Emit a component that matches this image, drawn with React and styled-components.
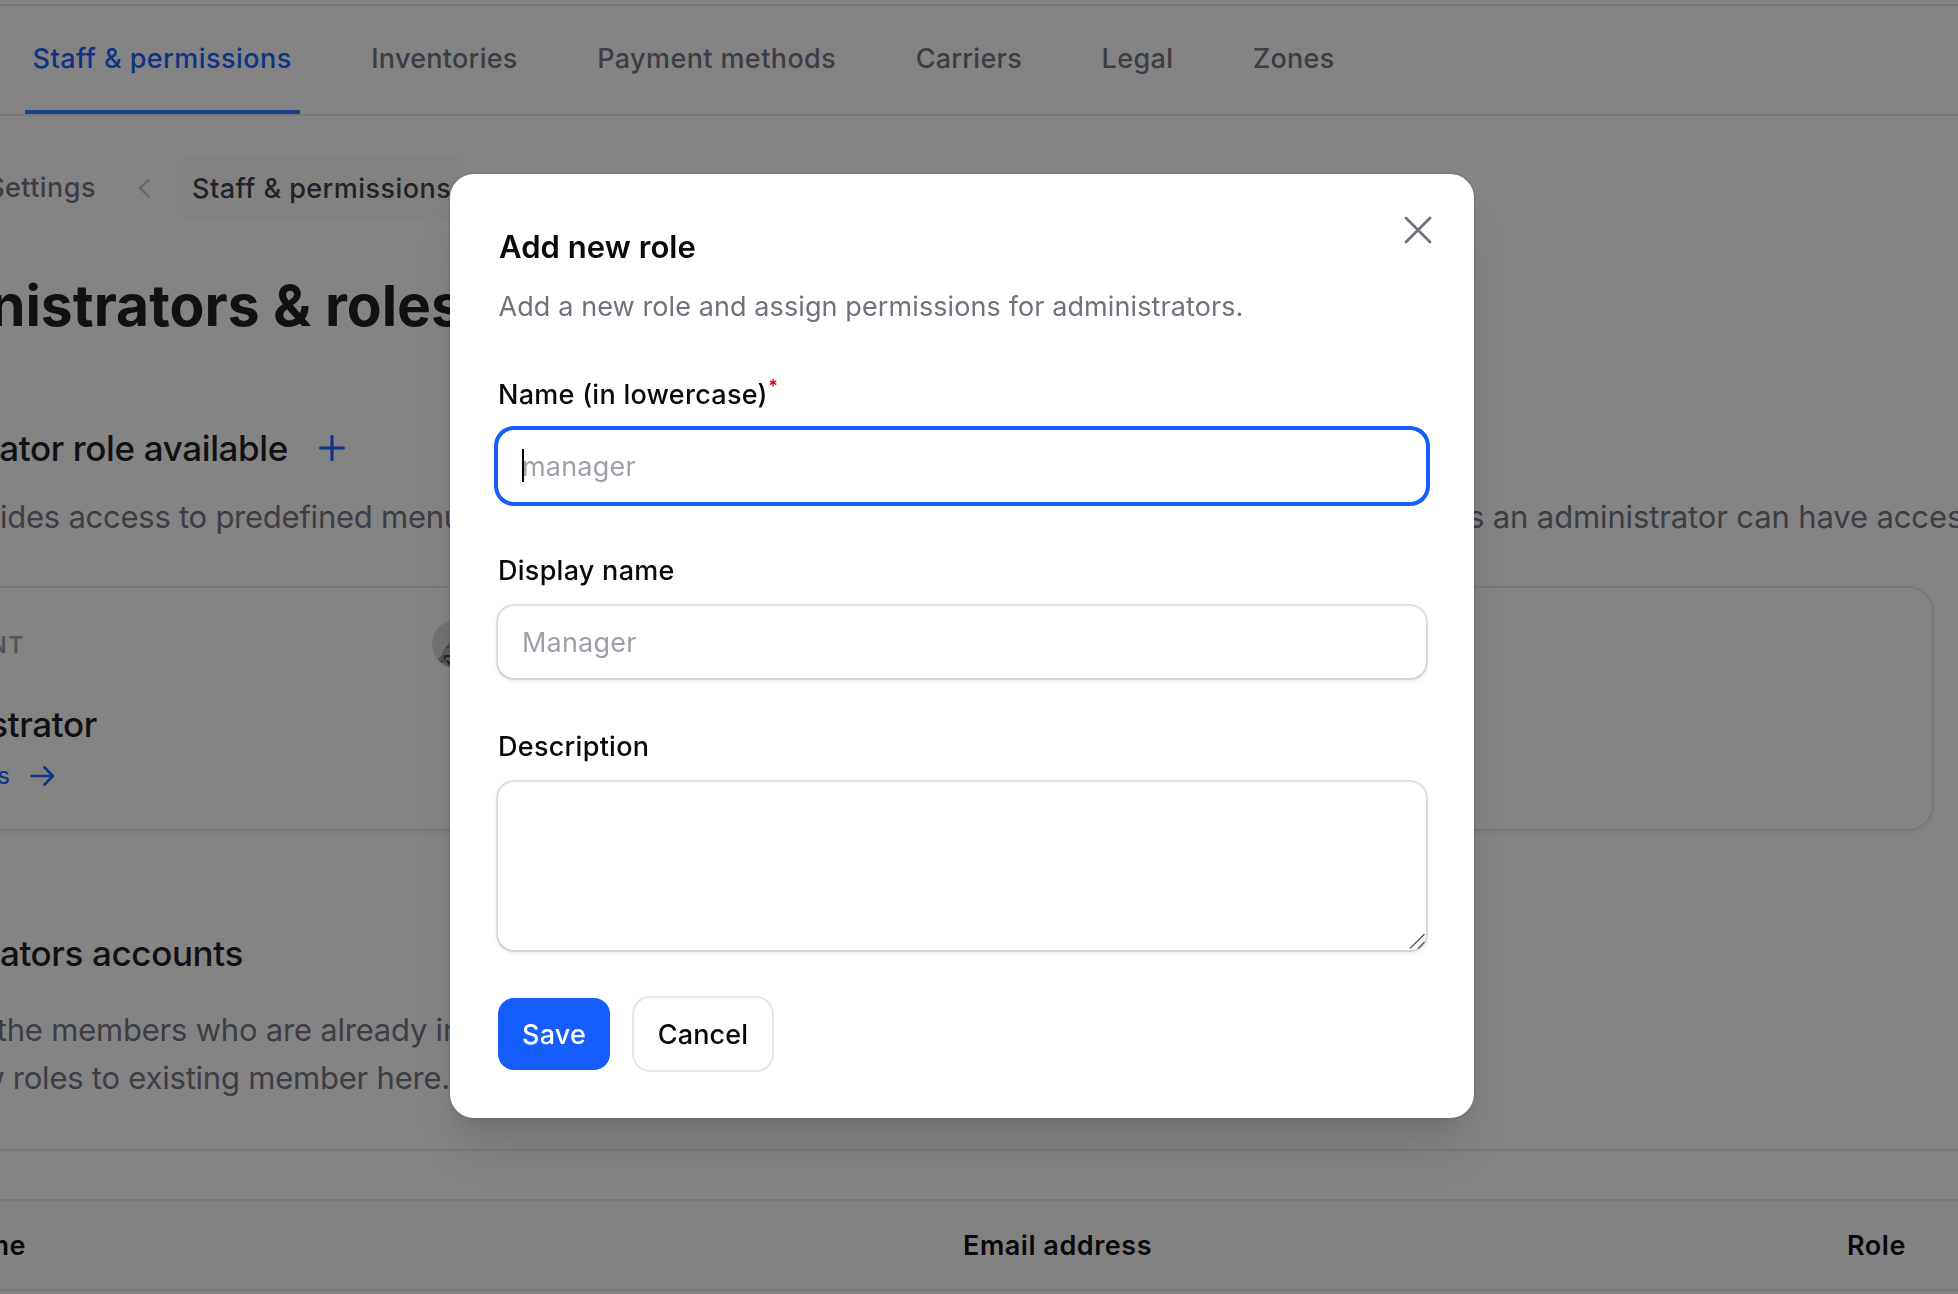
import React from "react";
import styled, { createGlobalStyle } from "styled-components";

const ink = "#09090b";
const heading = "#18181b";
const muted = "#71717b";
const faint = "#9f9fa9";
const blue = "#155dfc";
const line = "#e6e6e7";

const GlobalStyle = createGlobalStyle`
  * { box-sizing: border-box; }
  body {
    margin: 0;
    background: #fff;
    font-family: Inter, "Liberation Sans", sans-serif;
    font-size: 27px;
    overflow: hidden;
  }
`;

const Page = styled.div`
  display: flex;
  flex-direction: column;
  width: 1958px;
  height: 1294px;
  padding-top: 4px;
  overflow: hidden;
  background: #fff;
  white-space: nowrap;
`;

const Nav = styled.nav`
  display: flex;
  flex: none;
  gap: 64px;
  height: 112px;
  padding-left: 25px;
  border-top: 2px solid ${line};
  border-bottom: 2px solid ${line};
`;

const Tab = styled.span`
  height: 108px;
  padding: 0 8px 0 7.5px;
  line-height: 106px;
  font-weight: 500;
  letter-spacing: ${(p) => p.$track}px;
  color: ${(p) => (p.$active ? blue : muted)};
  border-bottom: 4px solid ${(p) => (p.$active ? "#2b7fff" : "transparent")};
`;

const Tail = styled.div`
  display: flex;
  flex: none;
  justify-content: flex-end;
  width: ${(p) => p.$width}px;
  overflow: hidden;
`;

const Breadcrumb = styled.div`
  display: flex;
  align-items: center;
  flex: none;
  height: 64px;
  margin-top: 40px;
  line-height: 66px;
  font-weight: 500;
  letter-spacing: 0.45px;
  color: ${muted};
`;

const Chevron = styled.svg`
  margin: 0 25px 0 41px;
`;

const Crumb = styled.span`
  width: 291px;
  height: 64px;
  padding-left: 16px;
  border-radius: 14px;
  background: #fbfbfb;
  color: #3a3a41;
`;

const Title = styled.h1`
  margin: 50px 0 0;
  font-size: 57px;
  line-height: 72px;
  font-weight: 700;
  color: ${heading};
`;

const SectionHead = styled.div`
  display: flex;
  align-items: center;
  flex: none;
  gap: 31px;
  margin-top: ${(p) => p.$top}px;
`;

const SectionTitle = styled.h2`
  margin: 0;
  font-size: 35px;
  line-height: 56px;
  font-weight: 500;
  letter-spacing: -0.37px;
  color: ${heading};
`;

const Lead = styled.div`
  display: flex;
  flex: none;
  height: 48px;
  margin-top: 17px;
  font-size: 31px;
  line-height: 48px;
  color: ${muted};
`;

const LeadPart = styled.span`
  flex: none;
  width: ${(p) => p.$width}px;
  letter-spacing: ${(p) => p.$track}px;
`;

const Card = styled.section`
  flex: none;
  width: 1934px;
  height: 245px;
  margin-top: 45px;
  padding-top: 32px;
  border: 2px solid ${line};
  border-left: 0;
  border-radius: 0 26px 26px 0;
  box-shadow: 0 2px 4px rgba(0, 0, 0, 0.07);
`;

const CardTop = styled.div`
  display: flex;
  justify-content: space-between;
  width: 480px;
  height: 48px;
  line-height: 50px;
  font-size: 23px;
  font-weight: 600;
  letter-spacing: 1.6px;
  color: ${faint};
`;

const CardName = styled(SectionTitle)`
  margin-top: 28px;
`;

const CardLink = styled.div`
  display: flex;
  align-items: center;
  gap: 19px;
  margin-top: 6px;
  line-height: 36px;
  font-size: 24px;
  color: ${blue};
`;

const Copy = styled.div`
  flex: none;
  margin-top: 25px;
  font-size: 31px;
  line-height: 48px;
  letter-spacing: -0.22px;
  color: ${muted};
`;

const Rule = styled.div`
  flex: none;
  height: 2px;
  margin: 47px 0 48px;
  background: ${line};
`;

const TableHead = styled.div`
  display: grid;
  flex: none;
  grid-template-columns: 963px 884px 1fr;
  height: 92px;
  line-height: 90px;
  font-weight: 600;
  letter-spacing: 0.54px;
  color: ${ink};
  background: #fafafa;
  border-top: 2px solid ${line};
  border-bottom: 2px solid ${line};
`;

const Backdrop = styled.div`
  position: fixed;
  inset: 0;
  display: flex;
  align-items: flex-start;
  padding: 174px 0 0 450px;
  background: rgba(9, 9, 11, 0.5);
`;

const Dialog = styled.div`
  position: relative;
  display: flex;
  flex-direction: column;
  width: 1024px;
  height: 944px;
  padding: 49px 48px 48px;
  border-radius: 24px;
  background: #fff;
  color: ${ink};
  box-shadow: 0 0 0 2px rgba(9, 9, 11, 0.06), 0 40px 50px -10px rgba(0, 0, 0, 0.1),
    0 16px 20px -12px rgba(0, 0, 0, 0.1);
`;

const Close = styled.button`
  position: absolute;
  top: 32px;
  right: 32px;
  width: 48px;
  height: 48px;
  padding: 0;
  border: 0;
  background: none;
  color: ${muted};
`;

const DialogTitle = styled.h3`
  margin: 0;
  padding-left: 1px;
  font-size: 31px;
  line-height: 48px;
  font-weight: 600;
  letter-spacing: 0.06px;
`;

const DialogText = styled.p`
  margin: 15px 0 0;
  padding-left: 0.5px;
  height: 40px;
  line-height: 42px;
  letter-spacing: 0.1px;
  color: ${muted};
`;

const Field = styled.div`
  position: relative;
  display: flex;
  flex-direction: column;
  gap: 12px;
  margin-top: 44px;
`;

const Label = styled.label`
  height: 48px;
  line-height: 50px;
  font-weight: 500;
  letter-spacing: 0.27px;
`;

const Required = styled.span`
  margin-left: 0.5px;
  font-size: 18px;
  font-weight: 600;
  line-height: 0;
  vertical-align: 11px;
  color: #e7000b;
`;

const Input = styled.input`
  width: 928px;
  height: 72px;
  padding: 0 24px;
  border: 0;
  border-radius: 16px;
  outline: 0;
  background: #fff;
  font: 400 27px Inter, "Liberation Sans", sans-serif;
  letter-spacing: 0.2px;
  box-shadow: ${(p) =>
    p.$focused ? `0 0 0 4px ${blue}` : "0 0 0 2px rgba(9,9,11,0.1), 0 2px 4px 1px rgba(0,0,0,0.1)"};
  &::placeholder { color: ${faint}; opacity: 1; }
`;

const Caret = styled.span`
  position: absolute;
  left: 24px;
  top: 79px;
  width: 2px;
  height: 33px;
  background: #000;
`;

const Area = styled.textarea`
  display: block;
  width: 928px;
  height: 168px;
  padding: 16px 24px;
  border: 0;
  border-radius: 16px;
  outline: 0;
  resize: none;
  background: #fff;
  box-shadow: 0 0 0 2px rgba(9, 9, 11, 0.1), 0 2px 4px 1px rgba(0, 0, 0, 0.1);
`;

const Grip = styled.svg`
  position: absolute;
  right: 0;
  bottom: 0;
`;

const Actions = styled.div`
  display: flex;
  gap: 24px;
  margin-top: 48px;
`;

const Button = styled.button`
  width: ${(p) => p.$width}px;
  height: 72px;
  padding: 1px 0 0;
  border: 0;
  border-radius: 16px;
  font: 500 27px/72px Inter, "Liberation Sans", sans-serif;
  letter-spacing: 0.15px;
  color: ${(p) => (p.$primary ? "#fff" : ink)};
  background: ${(p) => (p.$primary ? blue : "#fff")};
  box-shadow: ${(p) => (p.$primary ? "none" : `0 0 0 2px ${line}`)};
`;

const tabs = [
  ["Staff & permissions", 0.45],
  ["Inventories", 0.27],
  ["Payment methods", 0.4],
  ["Carriers", 0.25],
  ["Legal", 0.4],
  ["Zones", 0.25],
];

function Avatar() {
  return (
    <svg width="48" height="48" viewBox="0 0 48 48">
      <defs>
        <clipPath id="face"><circle cx="24" cy="24" r="24" /></clipPath>
      </defs>
      <g clipPath="url(#face)">
        <rect width="48" height="48" fill="#dededa" />
        <path d="M4 40 L9 36 L12 29 L16 24 L26 20 L48 22 V48 H6 Z" fill="#adadab" />
        <path d="M9 38 l3-3 M8 42 l5-2 5 4 M14 28 l3-2" fill="none" stroke="#77777b" strokeWidth="1.4" />
        <path d="M12 39 l2-3 4 0 M15 41 l4 4" fill="none" stroke="#3a3a3c" strokeWidth="2" />
      </g>
    </svg>
  );
}

export default function App() {
  return (
    <>
      <GlobalStyle />
      <Page>
        <Nav>
          {tabs.map(([name, track], i) => (
            <Tab key={name} $active={i === 0} $track={track}>{name}</Tab>
          ))}
        </Nav>
        <Breadcrumb>
          <Tail $width={96}>Settings</Tail>
          <Chevron width="14" height="22" viewBox="0 0 14 22" fill="none" stroke="#c4c4ca" strokeWidth="2.4" strokeLinecap="round" strokeLinejoin="round">
            <path d="M11.5 3 L3 11 L11.5 19.5" />
          </Chevron>
          <Crumb>Staff &amp; permissions</Crumb>
        </Breadcrumb>
        <Title><Tail $width={463}>nistrators &amp; roles</Tail></Title>
        <SectionHead $top={78}>
          <SectionTitle><Tail $width={288}>ator role available</Tail></SectionTitle>
          <svg width="26" height="26" viewBox="0 0 26 26" fill="none" stroke={blue} strokeWidth="3.2" strokeLinecap="round">
            <path d="M13 1.6 V24.4 M1.6 13 H24.4" />
          </svg>
        </SectionHead>
        <Lead>
          <LeadPart $width={1468} $track={-0.25}>ides access to predefined menu</LeadPart>
          <LeadPart $track={-0.13}>s an administrator can have access</LeadPart>
        </Lead>
        <Card>
          <CardTop>
            <Tail $width={25}>NT</Tail>
            <Avatar />
          </CardTop>
          <CardName><Tail $width={97}>strator</Tail></CardName>
          <CardLink>
            <Tail $width={10}>s</Tail>
            <svg width="26" height="22" viewBox="0 0 26 22" fill="none" stroke={blue} strokeWidth="2.6" strokeLinecap="round" strokeLinejoin="round">
              <path d="M2.5 11 H24 M15.5 2.5 L24 11 L15.5 19.5" />
            </svg>
          </CardLink>
        </Card>
        <SectionHead $top={94}>
          <SectionTitle><Tail $width={243}>ators accounts</Tail></SectionTitle>
        </SectionHead>
        <Copy>
          <Tail $width={461}>the members who are already in</Tail>
          <Tail $width={450}>w roles to existing member here.</Tail>
        </Copy>
        <Rule />
        <TableHead>
          <Tail $width={26}>me</Tail>
          <span>Email address</span>
          <span>Role</span>
        </TableHead>
      </Page>
      <Backdrop>
        <Dialog role="dialog">
          <Close aria-label="Close">
            <svg width="48" height="48" viewBox="0 0 24 24" fill="none" stroke="currentColor" strokeWidth="1.4" strokeLinecap="round">
              <path d="M6 18 18 6M6 6l12 12" />
            </svg>
          </Close>
          <DialogTitle>Add new role</DialogTitle>
          <DialogText>Add a new role and assign permissions for administrators.</DialogText>
          <Field>
            <Label>Name (in lowercase)<Required>*</Required></Label>
            <Input $focused placeholder="manager" />
            <Caret />
          </Field>
          <Field>
            <Label>Display name</Label>
            <Input placeholder="Manager" />
          </Field>
          <Field>
            <Label>Description</Label>
            <Area />
            <Grip width="18" height="18" viewBox="0 0 18 18" stroke="#5f5f61" strokeWidth="1.5">
              <path d="M2 16.5 L16.5 2 M10 16.5 L16.5 10" />
            </Grip>
          </Field>
          <Actions>
            <Button $primary $width={112}>Save</Button>
            <Button $width={138}>Cancel</Button>
          </Actions>
        </Dialog>
      </Backdrop>
    </>
  );
}
